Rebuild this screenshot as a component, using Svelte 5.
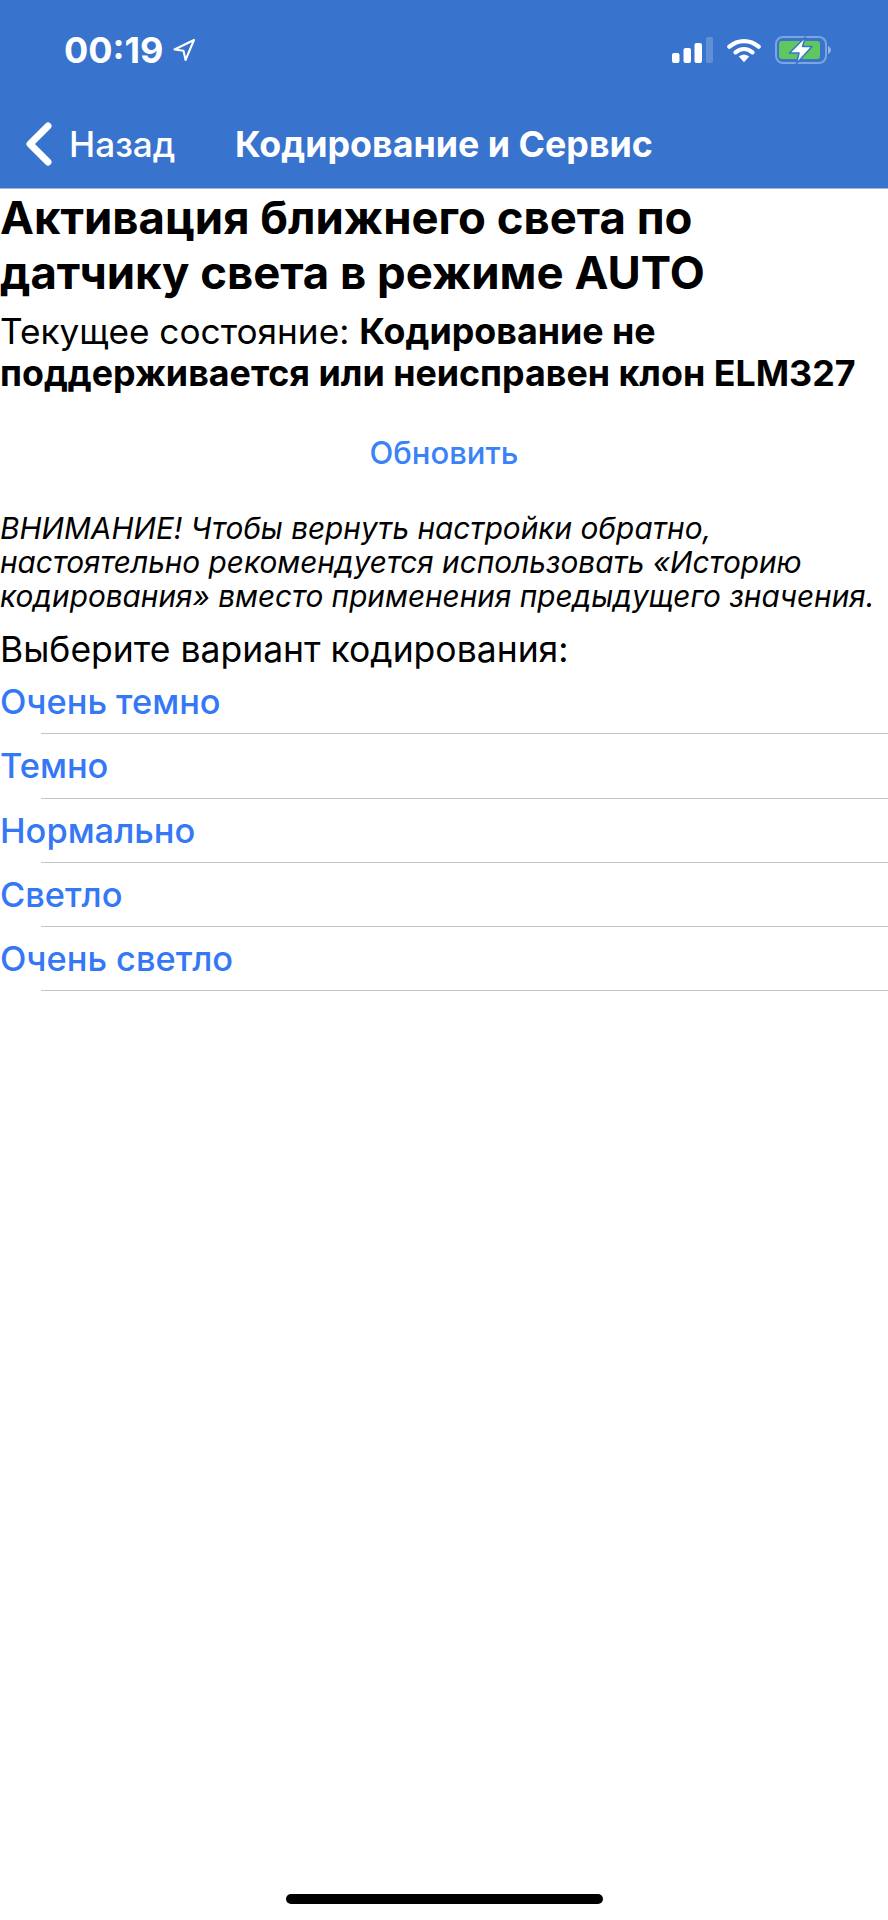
<script>
	const options = ['Очень темно', 'Темно', 'Нормально', 'Светло', 'Очень светло'];
</script>

<div class="screen">
	<header class="top">
		<div class="status">
			<div class="clock">
				<span>00:19</span>
				<svg class="arrow" width="24" height="24" viewBox="0 0 24 24">
					<path d="M22 2 2.500 11.500 11.500 12.800 13.500 22Z" fill="none" stroke="#fff" stroke-width="2" stroke-linejoin="round" />
				</svg>
			</div>
			<div class="indicators">
				<svg width="41" height="26" viewBox="0 0 41 26">
					<rect x="0" y="16" width="7.500" height="10" rx="2" fill="#fff" />
					<rect x="11.500" y="11" width="7.500" height="15" rx="2" fill="#fff" />
					<rect x="22.500" y="6" width="7.500" height="20" rx="2" fill="#fff" />
					<rect x="34" y="0" width="7" height="26" rx="2" fill="#fff" opacity="0.2" />
				</svg>
				<svg width="34" height="26" viewBox="0 0 36 26">
					<path d="M2.500 9.500C11.500 1.500 24.500 1.500 33.500 9.500" fill="none" stroke="#fff" stroke-width="4.500" stroke-linecap="round" />
					<path d="M9 15.500C14.500 10.800 21.500 10.800 27 15.500" fill="none" stroke="#fff" stroke-width="4.500" stroke-linecap="round" />
					<path d="M12.500 20 18 26 23.500 20C20 17.500 16 17.500 12.500 20Z" fill="#fff" />
				</svg>
				<svg width="56" height="28" viewBox="0 0 56 28">
					<rect x="1" y="1" width="50" height="26" rx="7" fill="none" stroke="#fff" stroke-opacity="0.35" stroke-width="2" />
					<rect x="4" y="5" width="41" height="18" rx="3" fill="#5ec75e" />
					<path d="M53 10c2 .8 3 2.300 3 4s-1 3.200-3 4Z" fill="#fff" opacity="0.45" />
					<path d="M30.500 1 14.500 17H24L21.500 27.500 37 10.500H27.500Z" fill="#fff" stroke="#3873cd" stroke-width="1.500" stroke-linejoin="round" />
				</svg>
			</div>
		</div>
		<nav class="bar">
			<div class="back">
				<svg width="30" height="44" viewBox="0 0 30 44">
					<path d="M24 4 6 22 24 40" fill="none" stroke="#fff" stroke-width="7" stroke-linecap="round" stroke-linejoin="round" />
				</svg>
				<span>Назад</span>
			</div>
			<div class="title">Кодирование и Сервис</div>
		</nav>
	</header>

	<main>
		<h1>Активация ближнего света по<br />датчику света в режиме AUTO</h1>
		<p class="state">Текущее состояние: <b>Кодирование не<br />поддерживается или неисправен клон ELM327</b></p>
		<div class="refresh">Обновить</div>
		<p class="warn">ВНИМАНИЕ! Чтобы вернуть настройки обратно,<br />настоятельно рекомендуется использовать «Историю<br />кодирования» вместо применения предыдущего значения.</p>
		<p class="choose">Выберите вариант кодирования:</p>
		<ul>
			{#each options as option}
				<li><span>{option}</span></li>
			{/each}
		</ul>
	</main>

	<div class="home"></div>
</div>

<style>
	:global(body) {
		margin: 0;
		background: #fff;
	}

	.screen {
		position: relative;
		width: 888px;
		height: 1920px;
		overflow: hidden;
		font-family: Inter, "Liberation Sans", sans-serif;
		color: #000;
	}

	.top {
		height: 188px;
		background: #3873cd;
		border-bottom: 1px solid #9db7e2;
		color: #fff;
	}

	.status {
		display: flex;
		justify-content: space-between;
		align-items: center;
		height: 100px;
		padding: 0 57px 0 64px;
	}

	.clock {
		display: flex;
		align-items: center;
		gap: 9px;
		font-size: 36px;
		font-weight: 700;
	}

	.indicators {
		display: flex;
		align-items: center;
		gap: 14px;
	}

	.bar {
		display: flex;
		align-items: center;
		height: 88px;
		padding-left: 24px;
	}

	.back {
		display: flex;
		align-items: center;
		gap: 15px;
		width: 211px;
		font-size: 35.200px;
		font-weight: 500;
	}

	.title {
		font-size: 35.800px;
		font-weight: 700;
		white-space: nowrap;
	}

	h1 {
		margin: 0;
		padding-top: 1px;
		font-size: 45.500px;
		line-height: 55px;
		font-weight: 700;
		white-space: nowrap;
	}

	.state {
		margin: 10px 0 0;
		font-size: 35.200px;
		line-height: 42px;
		white-space: nowrap;
	}

	.state b {
		font-size: 35.800px;
		font-weight: 700;
	}

	.refresh {
		margin-top: 39px;
		text-align: center;
		font-size: 31px;
		font-weight: 500;
		line-height: 40px;
		color: #3a82f7;
	}

	.warn {
		margin: 38px 0 0;
		font-size: 29.750px;
		line-height: 34px;
		font-style: italic;
		white-space: nowrap;
	}

	.choose {
		margin: 17px 0 0;
		font-size: 35.500px;
		line-height: 40px;
	}

	ul {
		margin: 0;
		padding: 0;
		list-style: none;
	}

	li {
		height: 64.300px;
		display: flex;
		align-items: center;
		position: relative;
		font-size: 34.400px;
		font-weight: 500;
		color: #3478f6;
	}

	li span {
		margin-bottom: 1px;
	}

	li::after {
		content: '';
		position: absolute;
		left: 41px;
		right: 0;
		bottom: 0;
		height: 1px;
		background: #c6c6c8;
	}

	.home {
		position: absolute;
		left: 286px;
		bottom: 16px;
		width: 317px;
		height: 10px;
		border-radius: 5px;
		background: #000;
	}
</style>
